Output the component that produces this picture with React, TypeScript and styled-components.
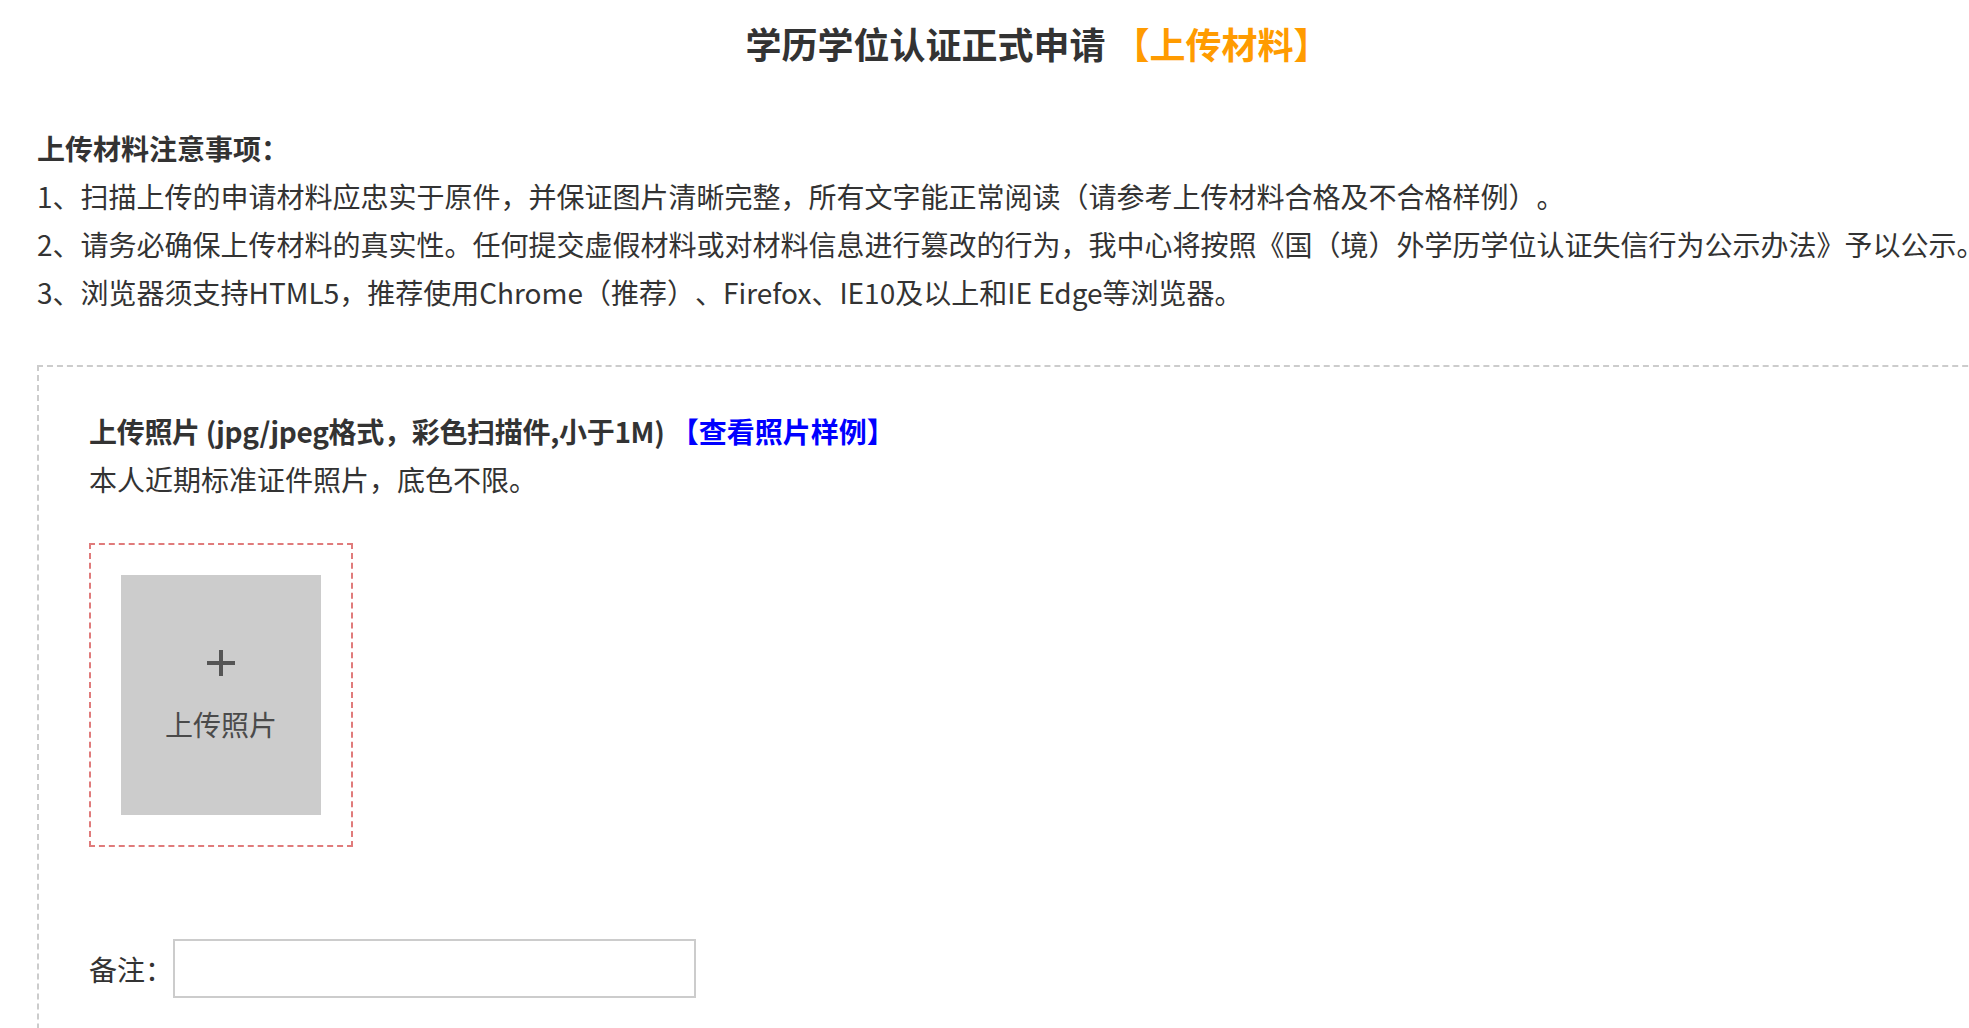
import { FC } from "react";
import styled, { createGlobalStyle } from "styled-components";

const GlobalStyle = createGlobalStyle`
    html, body {
        margin: 0;
        padding: 0;
        background: #fff;
    }
    body {
        font-family: "Noto Sans CJK SC", "Noto Sans", sans-serif;
        color: #333;
        overflow: hidden;
        text-spacing-trim: space-all;
    }
    #root {
        height: 1028px;
        overflow: hidden;
    }
`;

const Page = styled.div`
    width: 2038px;
    box-sizing: border-box;
    padding: 13px 0 0 37px;
`;

const Title = styled.h1`
    margin: 0;
    text-align: center;
    font-size: 36px;
    font-weight: 700;
    line-height: 60px;
    color: #333;
`;

const TitleTag = styled.span`
    color: #ff9b00;
`;

const Notes = styled.div`
    margin-top: 51px;
    font-size: 28px;
    line-height: 48px;
`;

const NotesHeading = styled.div`
    font-weight: 700;
`;

const NoteLine = styled.div`
    white-space: nowrap;
`;

const Section = styled.section`
    margin-top: 49px;
    border: 2px dashed #ccc;
    padding: 40px 50px 0;
    height: 800px;
`;

const SectionTitle = styled.div`
    font-size: 28px;
    line-height: 48px;
    font-weight: 700;
    color: #333;
`;

const SectionName = styled.span`
    letter-spacing: -0.3px;
`;

const SampleLink = styled.a`
    color: #0000ff;
    text-decoration: none;
    cursor: pointer;
`;

const SectionHint = styled.div`
    font-size: 28px;
    line-height: 48px;
`;

const UploadFrame = styled.div`
    margin-top: 40px;
    width: 200px;
    padding: 30px;
    border: 2px dashed #e07b7b;
`;

const UploadTile = styled.div`
    width: 200px;
    height: 240px;
    background: #cccccc;
    display: flex;
    flex-direction: column;
    align-items: center;
    justify-content: center;
    gap: 27px;
    color: #4a4a4a;
    cursor: pointer;
`;

const UploadText = styled.span`
    font-size: 28px;
    line-height: 38px;
`;

const RemarkRow = styled.div`
    margin-top: 92px;
    display: flex;
    align-items: center;
    font-size: 28px;
`;

const RemarkInput = styled.input`
    width: 523px;
    height: 59px;
    box-sizing: border-box;
    border: 2px solid #ccc;
    outline: none;
    padding: 0 12px;
    font: inherit;
`;

const PlusIcon: FC = () => (
    <svg width="30" height="30" viewBox="0 0 30 30">
        <path d="M1 15H29M15 2V28" stroke="#555" strokeWidth="4" fill="none" />
    </svg>
);

export default function App() {
    return (
        <>
            <GlobalStyle />
            <Page>
                <Title>
                    学历学位认证正式申请 <TitleTag>【上传材料】</TitleTag>
                </Title>
                <Notes>
                    <NotesHeading>上传材料注意事项：</NotesHeading>
                    <NoteLine>1、扫描上传的申请材料应忠实于原件，并保证图片清晰完整，所有文字能正常阅读（请参考上传材料合格及不合格样例）。</NoteLine>
                    <NoteLine>2、请务必确保上传材料的真实性。任何提交虚假材料或对材料信息进行篡改的行为，我中心将按照《国（境）外学历学位认证失信行为公示办法》予以公示。</NoteLine>
                    <NoteLine>3、浏览器须支持HTML5，推荐使用Chrome（推荐）、Firefox、IE10及以上和IE Edge等浏览器。</NoteLine>
                </Notes>
                <Section>
                    <SectionTitle>
                        <SectionName>上传照片 (jpg/jpeg格式，彩色扫描件,小于1M)</SectionName>{" "}
                        <SampleLink>【查看照片样例】</SampleLink>
                    </SectionTitle>
                    <SectionHint>本人近期标准证件照片，底色不限。</SectionHint>
                    <UploadFrame>
                        <UploadTile>
                            <PlusIcon />
                            <UploadText>上传照片</UploadText>
                        </UploadTile>
                    </UploadFrame>
                    <RemarkRow>
                        <span>备注：</span>
                        <RemarkInput type="text" />
                    </RemarkRow>
                </Section>
            </Page>
        </>
    );
}
